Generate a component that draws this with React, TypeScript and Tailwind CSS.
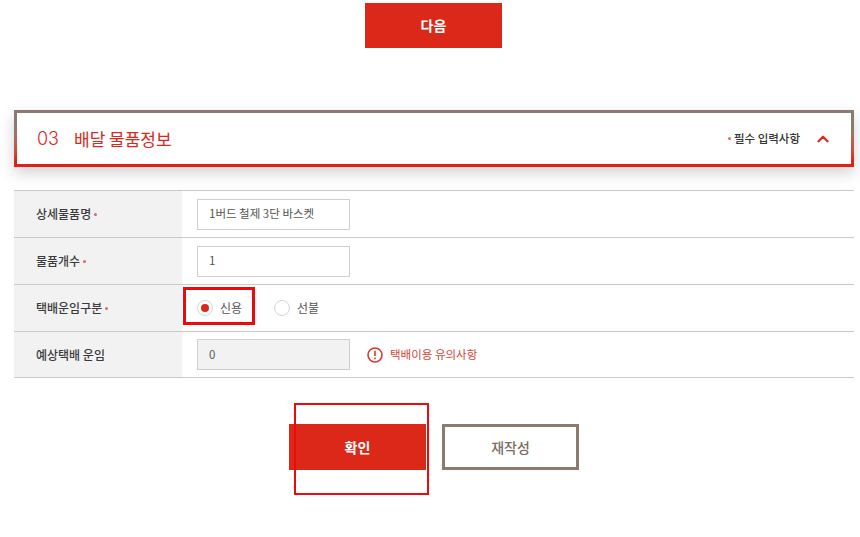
import { ChevronUp } from "lucide-react"

const font = { fontFamily: '"Noto Sans CJK KR", sans-serif' }

function Required() {
  return <span className="ml-[3px] inline-block w-[3px] h-[3px] rounded-full bg-[#e0685f] align-middle"></span>
}

function Row({ label, required, children, last }: { label: string; required?: boolean; children: React.ReactNode; last?: boolean }) {
  return (
    <div className={"flex h-[47px] border-t border-[#c9c9c9] " + (last ? "border-b" : "")}>
      <div className="w-[168px] shrink-0 bg-[#f2f2f2] pl-[22px] flex items-center text-[12px] font-medium text-[#3a3a3a]">
        {label}
        {required && <Required />}
      </div>
      <div className="flex-1 pl-[15px] flex items-center">{children}</div>
    </div>
  )
}

function Field({ value, disabled }: { value: string; disabled?: boolean }) {
  return (
    <div className={"w-[153px] h-[31px] border border-[#cfcfcf] pl-[11px] flex items-center text-[11.5px] text-[#555555] " + (disabled ? "bg-[#f2f2f2]" : "bg-white")}>
      {value}
    </div>
  )
}

export default function App() {
  return (
    <div className="relative w-[860px] h-[537px] overflow-hidden bg-white" style={font}>
      <div className="pt-[3px] pl-[365px]">
        <button className="w-[137px] h-[45px] bg-[#dc2819] text-white text-[14px] font-bold">다음</button>
      </div>

      <div className="mt-[62px] ml-[14px] w-[840px] h-[57px] p-[3px] bg-gradient-to-b from-[#8b7a6f] from-30% to-[#e0201a] to-90% shadow-[0_6px_14px_rgba(0,0,0,0.18)]">
        <div className="h-full bg-white flex items-center justify-between pl-[20px] pr-[19px]">
          <div className="flex items-center text-[#d9281c]">
            <span className="w-[37px] text-[18px] font-light" style={{ fontFamily: "Inter, sans-serif" }}>03</span>
            <span className="text-[17px]">배달 물품정보</span>
          </div>
          <div className="flex items-center">
            <span className="w-[3px] h-[3px] rounded-full bg-[#e0685f] mr-[3px]"></span>
            <span className="text-[11.5px] font-medium text-[#333333]">필수 입력사항</span>
            <ChevronUp className="ml-[14px] w-[18px] h-[18px] text-[#dc2819]" strokeWidth={3} />
          </div>
        </div>
      </div>

      <div className="mt-[23px] ml-[14px] w-[840px]">
        <Row label="상세물품명" required>
          <Field value="1버드 철제 3단 바스켓" />
        </Row>
        <Row label="물품개수" required>
          <Field value="1" />
        </Row>
        <Row label="택배운임구분" required>
          <div className="flex items-center text-[12px] text-[#555555]">
            <span className="w-[16px] h-[16px] rounded-full border border-[#d5d5d5] flex items-center justify-center">
              <span className="w-[8px] h-[8px] rounded-full bg-[#dc2819]"></span>
            </span>
            <span className="ml-[7px] w-[54px]">신용</span>
            <span className="w-[16px] h-[16px] rounded-full border border-[#d5d5d5]"></span>
            <span className="ml-[7px]">선불</span>
          </div>
        </Row>
        <Row label="예상택배 운임" last>
          <Field value="0" disabled />
          <svg className="ml-[17px] w-[16px] h-[16px]" viewBox="0 0 16 16" fill="none" stroke="#d9382c" strokeWidth="1.6">
            <circle cx="8" cy="8" r="7" />
            <path d="M8 3.8v5.2M8 10.6v1.6" />
          </svg>
          <span className="ml-[7px] text-[11.5px] text-[#d2453a]">택배이용 유의사항</span>
        </Row>
      </div>

      <div className="mt-[46px] ml-[289px] flex gap-[16px]">
        <button className="w-[137px] h-[46px] bg-[#dc2819] text-white text-[14px] font-bold">확인</button>
        <button className="w-[137px] h-[46px] border-[3px] border-[#8b7a6f] bg-white text-[#7a6d64] text-[14px] font-medium">재작성</button>
      </div>

      <div className="absolute left-[183px] top-[287px] w-[72px] h-[38px] border-[3px] border-[#ee0a0a]"></div>
      <div className="absolute left-[294px] top-[403px] w-[135px] h-[92px] border-[2px] border-[#ee0a0a]"></div>
    </div>
  )
}
